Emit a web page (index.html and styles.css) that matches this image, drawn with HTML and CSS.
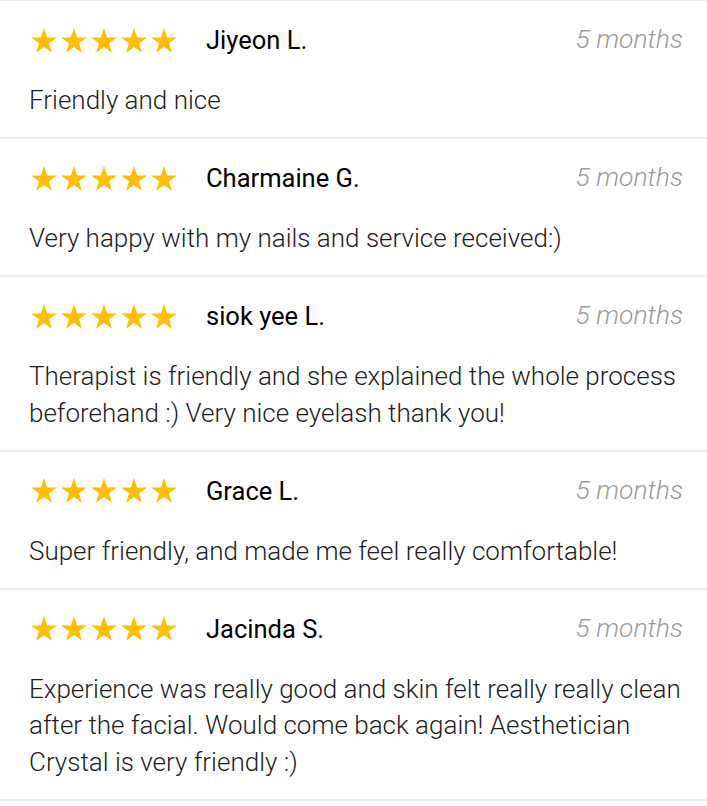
FILE: index.html
```html
<!DOCTYPE html>
<html>
<head>
<meta charset="utf-8">
<link rel="stylesheet" href="styles.css">
</head>
<body>
<svg width="0" height="0" class="defs">
  <defs>
    <polygon id="star" points="12.5,0 15.45,9.08 25,9.08 17.27,14.69 20.22,23.77 12.5,18.16 4.78,23.77 7.73,14.69 0,9.08 9.55,9.08"/>
  </defs>
</svg>
<div class="reviews">
  <div class="review">
    <div class="head">
      <div class="stars"><svg viewBox="0 0 25 24"><use href="#star"/></svg><svg viewBox="0 0 25 24"><use href="#star"/></svg><svg viewBox="0 0 25 24"><use href="#star"/></svg><svg viewBox="0 0 25 24"><use href="#star"/></svg><svg viewBox="0 0 25 24"><use href="#star"/></svg></div>
      <div class="name">Jiyeon L.</div>
      <div class="time">5 months</div>
    </div>
    <p class="text">Friendly and nice</p>
  </div>
  <div class="review">
    <div class="head">
      <div class="stars"><svg viewBox="0 0 25 24"><use href="#star"/></svg><svg viewBox="0 0 25 24"><use href="#star"/></svg><svg viewBox="0 0 25 24"><use href="#star"/></svg><svg viewBox="0 0 25 24"><use href="#star"/></svg><svg viewBox="0 0 25 24"><use href="#star"/></svg></div>
      <div class="name">Charmaine G.</div>
      <div class="time">5 months</div>
    </div>
    <p class="text">Very happy with my nails and service received:)</p>
  </div>
  <div class="review">
    <div class="head">
      <div class="stars"><svg viewBox="0 0 25 24"><use href="#star"/></svg><svg viewBox="0 0 25 24"><use href="#star"/></svg><svg viewBox="0 0 25 24"><use href="#star"/></svg><svg viewBox="0 0 25 24"><use href="#star"/></svg><svg viewBox="0 0 25 24"><use href="#star"/></svg></div>
      <div class="name">siok yee L.</div>
      <div class="time">5 months</div>
    </div>
    <p class="text">Therapist is friendly and she explained the whole process beforehand :) Very nice eyelash thank you!</p>
  </div>
  <div class="review">
    <div class="head">
      <div class="stars"><svg viewBox="0 0 25 24"><use href="#star"/></svg><svg viewBox="0 0 25 24"><use href="#star"/></svg><svg viewBox="0 0 25 24"><use href="#star"/></svg><svg viewBox="0 0 25 24"><use href="#star"/></svg><svg viewBox="0 0 25 24"><use href="#star"/></svg></div>
      <div class="name">Grace L.</div>
      <div class="time">5 months</div>
    </div>
    <p class="text">Super friendly, and made me feel really comfortable!</p>
  </div>
  <div class="review">
    <div class="head">
      <div class="stars"><svg viewBox="0 0 25 24"><use href="#star"/></svg><svg viewBox="0 0 25 24"><use href="#star"/></svg><svg viewBox="0 0 25 24"><use href="#star"/></svg><svg viewBox="0 0 25 24"><use href="#star"/></svg><svg viewBox="0 0 25 24"><use href="#star"/></svg></div>
      <div class="name">Jacinda S.</div>
      <div class="time">5 months</div>
    </div>
    <p class="text">Experience was really good and skin felt really really clean after the facial. Would come back again! Aesthetician Crystal is very friendly :)</p>
  </div>
</div>
</body>
</html>
```

FILE: styles.css
```css
html, body {
  margin: 0;
  padding: 0;
  background: #fff;
}
body {
  font-family: Roboto, "Liberation Sans", sans-serif;
}
.defs {
  position: absolute;
  width: 0;
  height: 0;
}
.reviews {
  border-top: 1px solid #ececec;
}
.review {
  border-bottom: 2px solid #ececec;
  padding: 21px 24px 18.5px 29px;
}
.head {
  display: flex;
  align-items: center;
  height: 36px;
}
.stars {
  display: flex;
  gap: 4px;
  margin-left: 2px;
  fill: #ffbf00;
}
.stars svg {
  width: 26px;
  height: 25px;
  display: block;
}
.stars use {
  fill: #ffbf00;
}
.name {
  margin-left: 29px;
  font-size: 25.5px;
  font-weight: 400;
  color: #000;
}
.time {
  margin-left: auto;
  margin-top: -3px;
  font-size: 26.5px;
  font-weight: 300;
  font-style: italic;
  color: #9a9a9a;
}
.text {
  margin: 24px 0 0;
  font-size: 26px;
  line-height: 36.5px;
  font-weight: 300;
  color: #1e1e1e;
}
```
